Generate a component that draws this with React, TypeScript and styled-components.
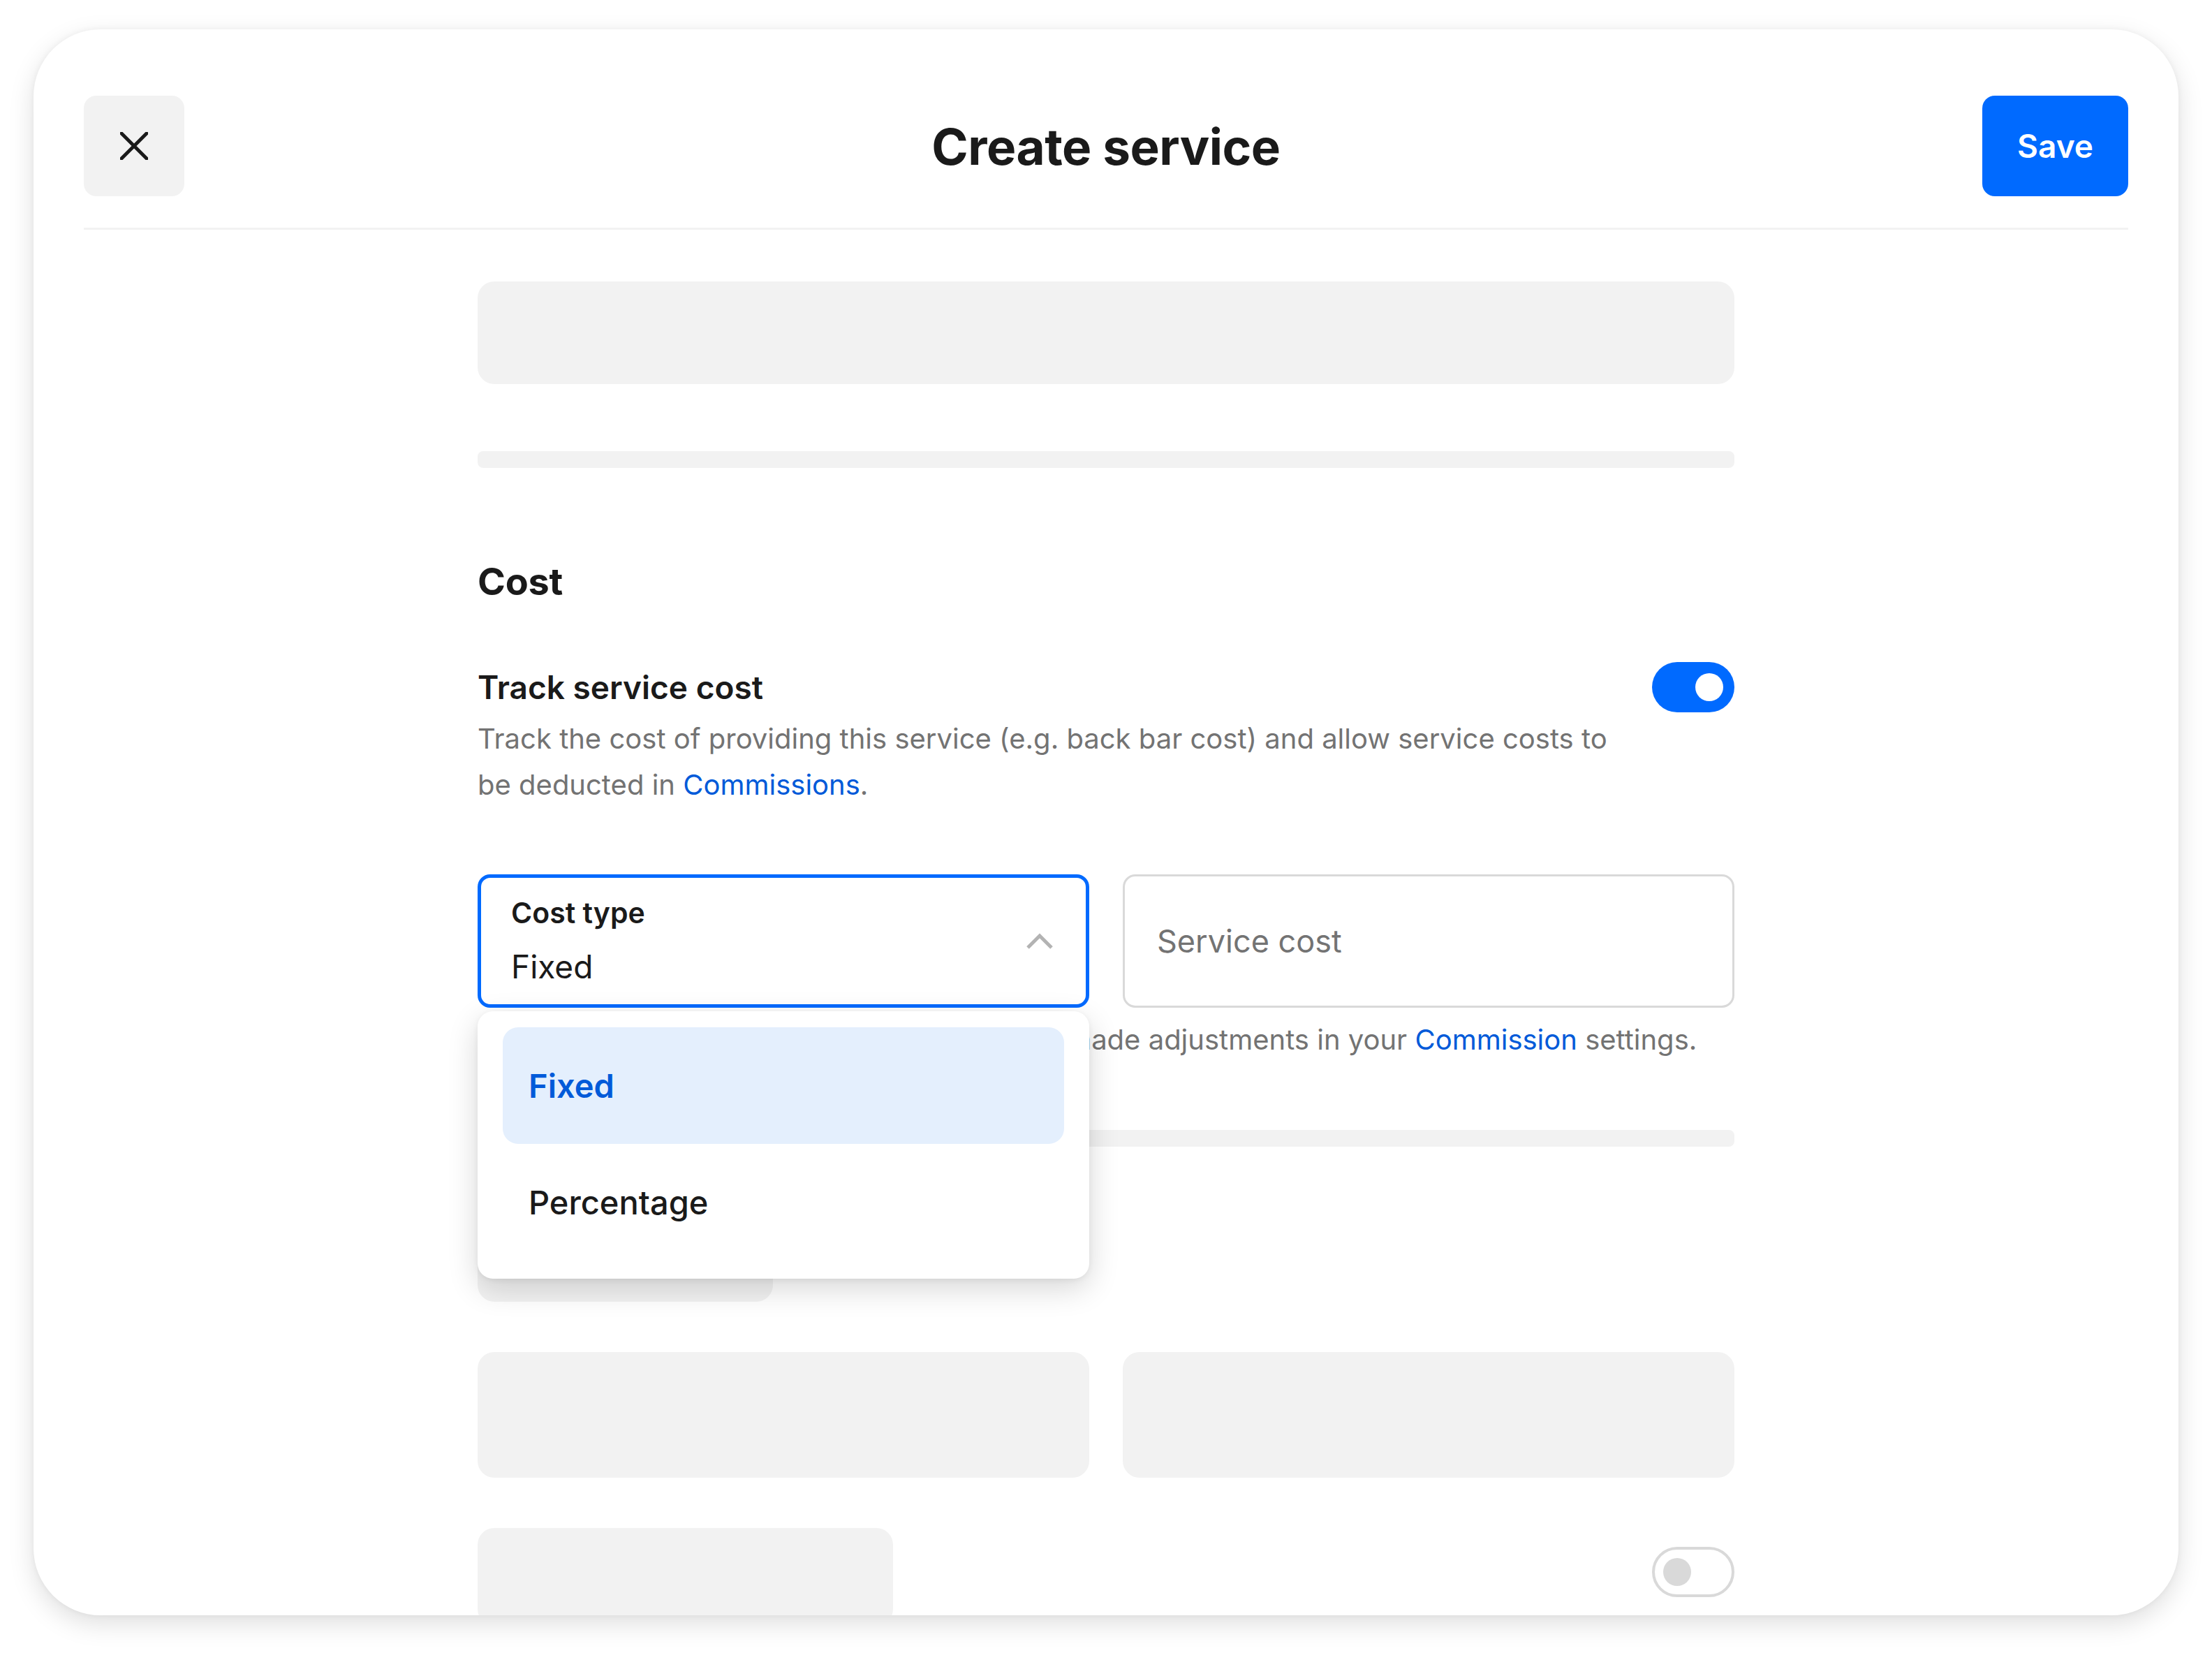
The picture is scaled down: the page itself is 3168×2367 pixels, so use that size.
import styled, { createGlobalStyle } from "styled-components";

const GlobalStyle = createGlobalStyle`
  html, body {
    margin: 0;
    padding: 0;
    background: #ffffff;
  }
  body {
    font-family: Inter, "Noto Sans", sans-serif;
    color: #1a1a1a;
    -webkit-font-smoothing: antialiased;
  }
  * {
    box-sizing: border-box;
  }
`;

const Page = styled.div`
  padding: 42px 48px 54px;
`;

const Card = styled.div`
  height: 2271px;
  background: #ffffff;
  border-radius: 96px;
  box-shadow: 0 12px 36px rgba(0, 0, 0, 0.13), 0 0 8px rgba(0, 0, 0, 0.05);
  overflow: hidden;
`;

const Header = styled.header`
  margin: 0 72px;
  padding: 95px 0 45px;
  display: grid;
  grid-template-columns: 1fr auto 1fr;
  align-items: center;
  border-bottom: 3px solid #f2f2f2;
`;

const CloseButton = styled.button`
  justify-self: start;
  width: 144px;
  height: 144px;
  border: none;
  border-radius: 18px;
  background: #f2f2f2;
  display: flex;
  align-items: center;
  justify-content: center;
  padding: 0;
  cursor: pointer;
`;

const Title = styled.h1`
  margin: 0;
  padding-top: 2px;
  font-size: 71px;
  font-weight: 700;
  letter-spacing: -0.5px;
  line-height: 1;
  color: #1a1a1a;
`;

const SaveButton = styled.button`
  justify-self: end;
  height: 144px;
  padding: 0 50px;
  border: none;
  border-radius: 18px;
  background: #006aff;
  color: #ffffff;
  font-family: inherit;
  font-size: 46px;
  font-weight: 600;
  cursor: pointer;
`;

const Body = styled.main`
  width: 1800px;
  margin: 0 auto;
  padding-top: 74px;
`;

const Skeleton = styled.div<{ $h: number; $w?: number; $r?: number; $mt?: number }>`
  height: ${(p) => p.$h}px;
  width: ${(p) => (p.$w ? `${p.$w}px` : "100%")};
  margin-top: ${(p) => p.$mt ?? 0}px;
  border-radius: ${(p) => p.$r ?? 24}px;
  background: #f2f2f2;
  flex-shrink: 0;
`;

const SectionTitle = styled.h2`
  margin: 131px 0 0;
  font-size: 54px;
  line-height: 64px;
  font-weight: 700;
  letter-spacing: -0.3px;
`;

const ToggleRow = styled.div`
  margin-top: 83px;
  display: flex;
  align-items: flex-start;
  gap: 48px;
`;

const ToggleText = styled.div`
  flex: 1;
`;

const RowTitle = styled.div`
  font-size: 46px;
  line-height: 72px;
  font-weight: 600;
`;

const Hint = styled.p<{ $mt?: number }>`
  margin: ${(p) => p.$mt ?? 0}px 0 0;
  font-size: 40px;
  line-height: 66px;
  color: #737373;
`;

// the start of the helper line sits under the open menu
const Covered = styled.span`
  letter-spacing: -0.15px;
`;

const Link = styled.a`
  color: #005ad9;
  text-decoration: none;
`;

const Switch = styled.div<{ $on?: boolean }>`
  flex-shrink: 0;
  width: 118px;
  height: 72px;
  border-radius: 36px;
  display: flex;
  align-items: center;
  justify-content: ${(p) => (p.$on ? "flex-end" : "flex-start")};
  background: ${(p) => (p.$on ? "#006aff" : "#ffffff")};
  border: ${(p) => (p.$on ? "none" : "4px solid #d9d9d9")};
  padding: ${(p) => (p.$on ? "0 16px" : "0 12px")};

  &::after {
    content: "";
    width: 40px;
    height: 40px;
    border-radius: 50%;
    background: ${(p) => (p.$on ? "#ffffff" : "#d9d9d9")};
  }
`;

const FieldRow = styled.div`
  margin-top: 95px;
  display: grid;
  grid-template-columns: 1fr 1fr;
  gap: 48px;
`;

const SelectWrap = styled.div`
  position: relative;
`;

const SelectBox = styled.div`
  height: 191px;
  border: 5px solid #006aff;
  border-radius: 18px;
  padding: 0 46px 0 43px;
  display: flex;
  align-items: center;
  justify-content: space-between;
  background: #ffffff;
`;

const SelectValues = styled.div`
  display: flex;
  flex-direction: column;
  gap: 25px;
`;

const SelectLabel = styled.span`
  font-size: 41px;
  line-height: 48px;
  font-weight: 600;
`;

const SelectValue = styled.span`
  font-size: 46px;
  line-height: 56px;
  font-weight: 400;
`;

const Menu = styled.ul`
  position: absolute;
  top: calc(100% + 5px);
  left: 0;
  right: 0;
  z-index: 2;
  margin: 0;
  padding: 23px 36px 26px;
  list-style: none;
  background: #ffffff;
  border-radius: 22px;
  box-shadow: 0 14px 44px rgba(0, 0, 0, 0.16), 0 2px 8px rgba(0, 0, 0, 0.06);
`;

const MenuItem = styled.li<{ $selected?: boolean }>`
  height: 167px;
  padding: 0 37px;
  display: flex;
  align-items: center;
  border-radius: 22px;
  font-size: 47px;
  font-weight: ${(p) => (p.$selected ? 600 : 500)};
  color: ${(p) => (p.$selected ? "#005ad9" : "#1a1a1a")};
  background: ${(p) => (p.$selected ? "#e4effd" : "transparent")};
`;

const TextInput = styled.input`
  height: 191px;
  width: 100%;
  border: 3px solid #d9d9d9;
  border-radius: 18px;
  padding: 0 46px;
  font-family: inherit;
  font-size: 45px;
  color: #1a1a1a;
  outline: none;
  background: #ffffff;

  &::placeholder {
    color: #737373;
  }
`;

const SplitRow = styled.div`
  margin-top: 72px;
  display: grid;
  grid-template-columns: 1fr 1fr;
  gap: 48px;
`;

const BottomRow = styled.div`
  margin-top: 72px;
  display: flex;
  justify-content: space-between;
  align-items: flex-start;

  & > ${Switch} {
    margin-top: 27px;
  }
`;

const CloseIcon = () => (
  <svg width="40" height="40" viewBox="0 0 40 40" fill="none" aria-hidden="true">
    <path d="M2 2L38 38M38 2L2 38" stroke="#1a1a1a" strokeWidth="5" strokeLinecap="square" />
  </svg>
);

const ChevronUp = () => (
  <svg width="40" height="24" viewBox="0 0 40 24" fill="none" aria-hidden="true">
    <path d="M3 21L20 4L37 21" stroke="#b3b3b3" strokeWidth="5" />
  </svg>
);

export default function App() {
  return (
    <>
      <GlobalStyle />
      <Page>
        <Card>
          <Header>
            <CloseButton aria-label="Close">
              <CloseIcon />
            </CloseButton>
            <Title>Create service</Title>
            <SaveButton>Save</SaveButton>
          </Header>

          <Body>
            <Skeleton $h={147} />
            <Skeleton $h={24} $r={8} $mt={96} />

            <SectionTitle>Cost</SectionTitle>

            <ToggleRow>
              <ToggleText>
                <RowTitle>Track service cost</RowTitle>
                <Hint $mt={5}>
                  Track the cost of providing this service (e.g. back bar cost) and allow service costs to be deducted
                  in <Link href="#">Commissions</Link>.
                </Hint>
              </ToggleText>
              <Switch $on />
            </ToggleRow>

            <FieldRow>
              <SelectWrap>
                <SelectBox>
                  <SelectValues>
                    <SelectLabel>Cost type</SelectLabel>
                    <SelectValue>Fixed</SelectValue>
                  </SelectValues>
                  <ChevronUp />
                </SelectBox>
                <Menu>
                  <MenuItem $selected>Fixed</MenuItem>
                  <MenuItem>Percentage</MenuItem>
                </Menu>
              </SelectWrap>
              <TextInput placeholder="Service cost" />
            </FieldRow>

            <Hint $mt={13}>
              <Covered>Service cost is deducted only after you have m</Covered>ade adjustments in your{" "}
              <Link href="#">Commission</Link> settings.
            </Hint>

            <Skeleton $h={24} $r={8} $mt={96} />
            <Skeleton $h={72} $w={423} $mt={150} />

            <SplitRow>
              <Skeleton $h={180} />
              <Skeleton $h={180} />
            </SplitRow>

            <BottomRow>
              <Skeleton $h={140} $w={595} />
              <Switch />
            </BottomRow>
          </Body>
        </Card>
      </Page>
    </>
  );
}
